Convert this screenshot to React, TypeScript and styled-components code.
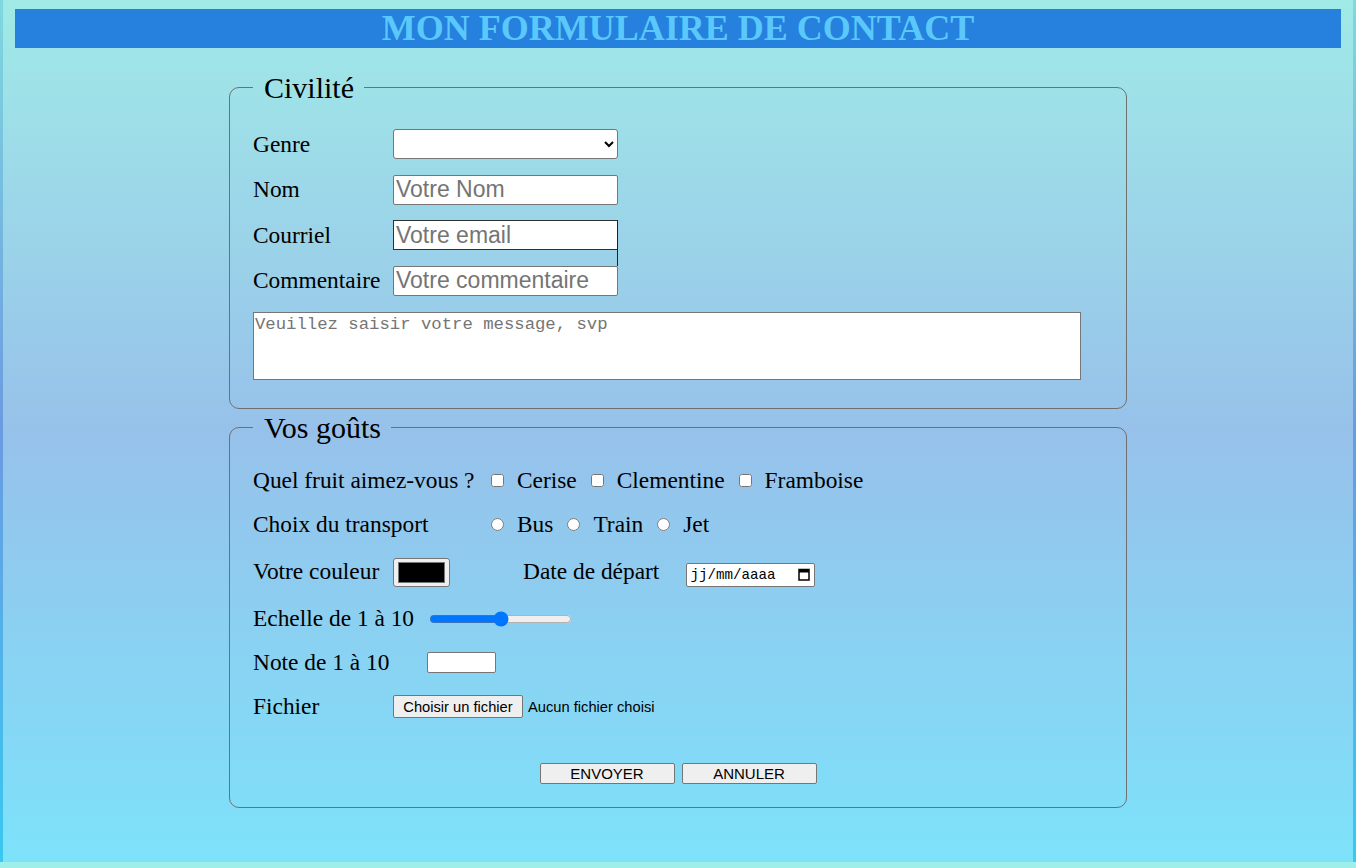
import React from "react";
import styled, { createGlobalStyle } from "styled-components";

const GlobalStyle = createGlobalStyle`
  html { background: #9eeee9; }
  body { margin: 0; font-family: "Liberation Serif", "Times New Roman", serif; }
  * { box-sizing: border-box; }
`;

const Page = styled.div`
  min-height: 862px;
  border-left: 3px solid;
  border-right: 3px solid;
  border-image: linear-gradient(#80d8de, #6a9be0 50%, #3ac8f0) 1;
  background: linear-gradient(#a0eae7 0%, #97c1ea 50%, #7de2fa 100%);
  padding: 9px 12px 1px 12px;
`;

const Title = styled.h1`
  margin: 0;
  height: 39px;
  line-height: 38px;
  background: #2580de;
  color: #5ac8fa;
  font-family: "Liberation Serif", serif;
  font-size: 36px;
  font-weight: bold;
  text-align: center;
`;

const Fieldset = styled.fieldset<{ $top: number; $bottom: number }>`
  width: 898px;
  margin: ${(p) => p.$top}px auto 0;
  border: 1px solid #707070;
  border-radius: 10px;
  padding: 0 23px ${(p) => p.$bottom}px;
  min-inline-size: 0;
`;

const Legend = styled.legend`
  padding: 0 10px 0 11px;
  font-size: 30px;
  line-height: 33px;
  color: #000;
`;

const Rows = styled.div<{ $pt: number; $gap: number }>`
  display: flex;
  flex-direction: column;
  gap: ${(p) => p.$gap}px;
  padding-top: ${(p) => p.$pt}px;
`;

const Row = styled.div<{ $h?: number }>`
  display: flex;
  align-items: center;
  height: ${(p) => p.$h ?? 30}px;
  font-size: 23.4px;
  color: #000;
`;

const Label = styled.label<{ $w?: number; $ml?: number }>`
  flex: none;
  width: ${(p) => (p.$w ? `${p.$w}px` : "auto")};
  margin-left: ${(p) => p.$ml ?? 0}px;
  white-space: nowrap;
`;

const TextInput = styled.input`
  width: 225px;
  height: 30px;
  margin: 0;
  padding: 1px 2px;
  border: 1px solid #767676;
  border-radius: 2px;
  background: #fff;
  font-family: "Liberation Sans", Arial, sans-serif;
  font-size: 23px;
  &::placeholder { color: #757575; }
`;

const EmailWrap = styled.div`
  position: relative;
  & > input { border-color: #303030; border-radius: 0; }
  &::after {
    content: "";
    position: absolute;
    right: 0;
    top: 0;
    width: 1px;
    height: 46px;
    background: #202020;
  }
`;

const Select = styled.select`
  width: 225px;
  height: 30px;
  margin: 0;
  border: 1px solid #767676;
  border-radius: 3px;
  background: #fff;
  font-size: 18px;
`;

const TextArea = styled.textarea`
  display: block;
  width: 828px;
  height: 68px;
  margin: 0;
  padding: 2px 1px;
  border: 1px solid #767676;
  background: #fff;
  resize: none;
  font-family: "Liberation Mono", "DejaVu Sans Mono", monospace;
  font-size: 17.3px;
  &::placeholder { color: #757575; }
`;

const Options = styled.div`
  display: flex;
  align-items: center;
  gap: 14px;
`;

const Option = styled.label`
  display: flex;
  align-items: center;
  gap: 13px;
  & > input { margin: 0; width: 13px; height: 13px; }
`;

const ColorInput = styled.input`
  width: 57px;
  height: 29px;
  margin: 1px 0 0;
  padding: 2px 3px;
  border: 1px solid #767676;
  border-radius: 3px;
  background: #efefef;
  &::-webkit-color-swatch-wrapper { padding: 1px; }
  &::-webkit-color-swatch { border: 1px solid #777; }
`;

const DateBox = styled.div`
  display: flex;
  align-items: center;
  justify-content: space-between;
  width: 129px;
  height: 24px;
  margin: 6px 0 0 27px;
  padding: 0 4px 0 3px;
  border: 1px solid #767676;
  border-radius: 2px;
  background: #fff;
  font-family: "Liberation Mono", "DejaVu Sans Mono", monospace;
  font-size: 14.2px;
  color: #000;
`;

const Range = styled.input`
  width: 143px;
  margin: 0 0 0 15px;
  accent-color: #0075ff;
`;

const NumberInput = styled.input`
  width: 69px;
  height: 21px;
  margin: 0;
  padding: 1px 2px;
  border: 1px solid #767676;
  border-radius: 2px;
  background: #fff;
`;

const FileButton = styled.button`
  height: 23px;
  width: 130px;
  padding: 1px 4px;
  border: 1px solid #767676;
  border-radius: 2px;
  background: #efefef;
  font-family: "Liberation Sans", Arial, sans-serif;
  font-size: 14.7px;
  color: #000;
  white-space: nowrap;
`;

const FileName = styled.span`
  margin-left: 5px;
  font-family: "Liberation Sans", Arial, sans-serif;
  font-size: 14.7px;
  color: #000;
`;

const Actions = styled.div`
  display: flex;
  justify-content: center;
  gap: 7px;
  margin-top: 41px;
`;

const ActionButton = styled.button`
  width: 135px;
  height: 21px;
  padding: 0;
  border: 1px solid #767676;
  border-radius: 2px;
  background: #efefef;
  font-family: "Liberation Sans", Arial, sans-serif;
  font-size: 15px;
  color: #000;
`;

const CalendarIcon = () => (
  <svg width="12" height="13" viewBox="0 0 12 13" aria-hidden="true">
    <rect x="1" y="1.5" width="10" height="10.5" fill="none" stroke="#000" strokeWidth="1.5" />
    <rect x="1" y="1.5" width="10" height="3" fill="#000" />
  </svg>
);

export default function App() {
  return (
    <>
      <GlobalStyle />
      <Page>
        <Title>MON FORMULAIRE DE CONTACT</Title>
        <form onSubmit={(e) => e.preventDefault()}>
          <Fieldset $top={23} $bottom={28}>
            <Legend>Civilité</Legend>
            <Rows $pt={25} $gap={15.67}>
              <Row>
                <Label $w={140} htmlFor="genre">Genre</Label>
                <Select id="genre" defaultValue="">
                  <option value=""></option>
                  <option value="m">Monsieur</option>
                  <option value="f">Madame</option>
                </Select>
              </Row>
              <Row>
                <Label $w={140} htmlFor="nom">Nom</Label>
                <TextInput id="nom" placeholder="Votre Nom" />
              </Row>
              <Row>
                <Label $w={140} htmlFor="email">Courriel</Label>
                <EmailWrap>
                  <TextInput id="email" type="email" placeholder="Votre email" />
                </EmailWrap>
              </Row>
              <Row>
                <Label $w={140} htmlFor="com">Commentaire</Label>
                <TextInput id="com" placeholder="Votre commentaire" />
              </Row>
              <TextArea placeholder="Veuillez saisir votre message, svp" />
            </Rows>
          </Fieldset>

          <Fieldset $top={2} $bottom={23}>
            <Legend>Vos goûts</Legend>
            <Rows $pt={22} $gap={14}>
              <Row>
                <Label $w={238}>Quel fruit aimez-vous ?</Label>
                <Options>
                  <Option><input type="checkbox" />Cerise</Option>
                  <Option><input type="checkbox" />Clementine</Option>
                  <Option><input type="checkbox" />Framboise</Option>
                </Options>
              </Row>
              <Row>
                <Label $w={238}>Choix du transport</Label>
                <Options>
                  <Option><input type="radio" name="transport" />Bus</Option>
                  <Option><input type="radio" name="transport" />Train</Option>
                  <Option><input type="radio" name="transport" />Jet</Option>
                </Options>
              </Row>
              <Row $h={36}>
                <Label $w={140}>Votre couleur</Label>
                <ColorInput type="color" defaultValue="#000000" />
                <Label $ml={73}>Date de départ</Label>
                <DateBox>
                  <span>jj/mm/aaaa</span>
                  <CalendarIcon />
                </DateBox>
              </Row>
              <Row>
                <Label>Echelle de 1 à 10</Label>
                <Range type="range" min={1} max={10} step="any" defaultValue={5.5} />
              </Row>
              <Row>
                <Label $w={174}>Note de 1 à 10</Label>
                <NumberInput type="number" min={1} max={10} />
              </Row>
              <Row>
                <Label $w={140}>Fichier</Label>
                <FileButton type="button">Choisir un fichier</FileButton>
                <FileName>Aucun fichier choisi</FileName>
              </Row>
            </Rows>
            <Actions>
              <ActionButton type="submit">ENVOYER</ActionButton>
              <ActionButton type="reset">ANNULER</ActionButton>
            </Actions>
          </Fieldset>
        </form>
      </Page>
    </>
  );
}
